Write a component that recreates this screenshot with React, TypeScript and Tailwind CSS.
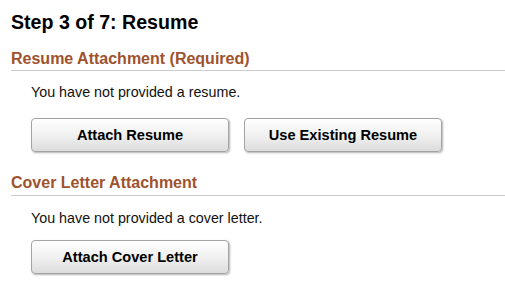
import React from "react";

function Btn({ label }: { label: string }) {
  return (
    <button
      type="button"
      className="w-[198px] h-[34px] rounded-[4px] border border-[#a4a4a4] bg-gradient-to-b from-[#fefefe] via-[#f1f1f1] to-[#dcdcdc] text-[14.6px] font-bold leading-[18px] text-black shadow-[1px_1px_2px_rgba(0,0,0,0.3)]"
    >
      {label}
    </button>
  );
}

export default function App() {
  return (
    <div className="w-[505px] h-[301px] overflow-hidden bg-white pl-[11px] pt-[10px] font-['Liberation_Sans',Arial,sans-serif]">
      <h1 className="text-[19.6px] font-bold leading-[24px] text-black">Step 3 of 7: Resume</h1>

      <section className="mt-[15px]">
        <h2 className="border-b border-[#cccccc] pb-[1px] text-[16px] font-bold leading-[20px] text-[#a0522d]">
          Resume Attachment (Required)
        </h2>
        <div className="pl-[20px]">
          <p className="mt-[12px] text-[14.3px] leading-[18px] text-[#111]">You have not provided a resume.</p>
          <div className="mt-[17px] flex gap-[15px]">
            <Btn label="Attach Resume" />
            <Btn label="Use Existing Resume" />
          </div>
        </div>
      </section>

      <section className="mt-[21px]">
        <h2 className="border-b border-[#cccccc] pb-[2px] text-[16px] font-bold leading-[20px] text-[#a0522d]">
          Cover Letter Attachment
        </h2>
        <div className="pl-[20px]">
          <p className="mt-[13px] text-[14.3px] leading-[18px] text-[#111]">You have not provided a cover letter.</p>
          <div className="mt-[13px] flex gap-[15px]">
            <Btn label="Attach Cover Letter" />
          </div>
        </div>
      </section>
    </div>
  );
}
